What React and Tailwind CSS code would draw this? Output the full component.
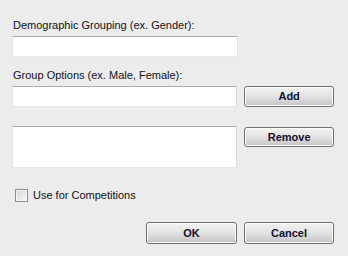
import React from "react";

function Btn({ children, className = "" }) {
  return (
    <div
      className={
        "flex items-center justify-center rounded-[3px] border border-[#707070] bg-gradient-to-b from-[#f3f3f3] via-[#e2e2e2] to-[#c4c4c4] text-[11px] font-bold text-[#101030] shadow-[inset_0_0_0_1px_#fbfbfb] " +
        className
      }
    >
      {children}
    </div>
  );
}

function TextBox({ className = "" }) {
  return (
    <div
      className={
        "border border-t-[#abadb3] border-l-[#e2e3ea] border-r-[#dbdfe6] border-b-[#e3e9ef] bg-white " +
        className
      }
    />
  );
}

export default function App() {
  return (
    <div
      className="w-[348px] h-[256px] bg-[#ececec] text-[11px] leading-[13px] text-[#101020] pl-[12px] pr-[14px] pt-[19px]"
      style={{ fontFamily: '"Liberation Sans", Arial, sans-serif' }}
    >
      <div className="pl-[1px]">Demographic Grouping (ex. Gender):</div>
      <TextBox className="mt-[4px] w-[226px] h-[21px]" />
      <div className="mt-[12px] pl-[1px]">Group Options (ex. Male, Female):</div>
      <div className="mt-[4px] flex gap-[7px]">
        <TextBox className="w-[226px] h-[21px]" />
        <Btn className="w-[90px] h-[21px]">Add</Btn>
      </div>
      <div className="mt-[19px] flex gap-[7px] items-start">
        <TextBox className="w-[226px] h-[42px]" />
        <Btn className="mt-[1px] w-[90px] h-[20px]">Remove</Btn>
      </div>
      <div className="mt-[21px] flex items-center pl-[3px]">
        <div className="w-[13px] h-[13px] border border-[#8f8f8f] bg-gradient-to-br from-[#d2d2d2] to-[#fbfbfb] shadow-[inset_0_0_0_1px_#f4f4f4]" />
        <span className="ml-[5px]">Use for Competitions</span>
      </div>
      <div className="mt-[20px] flex justify-end gap-[7px]">
        <Btn className="w-[91px] h-[22px]">OK</Btn>
        <Btn className="w-[90px] h-[22px]">Cancel</Btn>
      </div>
    </div>
  );
}
